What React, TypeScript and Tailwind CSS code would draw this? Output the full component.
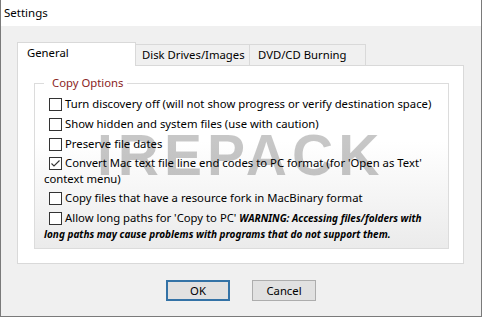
import React from "react";

const Box = ({ checked = false }: { checked?: boolean }) => (
  <span className="w-[13px] h-[13px] shrink-0 border border-[#333333] bg-white flex items-center justify-center">
    {checked && (
      <svg width="11" height="11" viewBox="0 0 11 11">
        <path d="M1.5 5.5 L4 8 L9.5 2.5" fill="none" stroke="#333333" strokeWidth="1.1" />
      </svg>
    )}
  </span>
);

const Row = ({ text, checked, className = "" }: { text: React.ReactNode; checked?: boolean; className?: string }) => (
  <div className={"flex items-center h-[16px] pl-[14px] " + className}>
    <Box checked={checked} />
    <span className="ml-[3px] whitespace-nowrap leading-[16px]">{text}</span>
  </div>
);

export default function App() {
  return (
    <div
      className="w-[482px] h-[317px] bg-[#f0f0f0] border-x border-b border-[#7a7a7a] flex flex-col text-[11.3px] text-black overflow-hidden"
      style={{ fontFamily: '"Noto Sans", "Open Sans", sans-serif' }}
    >
      <div className="h-[26px] bg-white flex items-center pl-[3px] shrink-0 text-[11.5px]">Settings</div>
      <div className="flex flex-col pl-[16px] pt-[15px]">
        <div className="flex items-end h-[24px] whitespace-nowrap">
          <div className="relative z-10 w-[119px] h-[24px] mb-[-1px] bg-white border border-b-0 border-[#d9d9d9] pl-[9px] pt-[2px] leading-[16px]">
            General
          </div>
          <div className="w-[114px] h-[21px] border-t border-r border-[#d9d9d9] pl-[6px] leading-[19px]">
            Disk Drives/Images
          </div>
          <div className="w-[116px] h-[21px] border-t border-r border-[#d9d9d9] pl-[8px] leading-[19px]">
            DVD/CD Burning
          </div>
        </div>
        <div className="relative w-[447px] h-[199px] bg-white border border-[#d9d9d9] pt-[9px] pl-[16px]">
          <fieldset className="w-[415px] h-[174px] border border-[#dcdcdc] bg-linear-to-b from-white from-35% to-[#ebebeb]">
            <legend className="ml-[9px] pl-[8px] pr-[4px] leading-[16px] text-[#8b2525]">Copy Options</legend>
            <Row className="mt-[5px]" text="Turn discovery off (will not show progress or verify destination space)" />
            <Row className="mt-[4px]" text="Show hidden and system files (use with caution)" />
            <Row className="mt-[4px]" text="Preserve file dates" />
            <Row className="mt-[3px]" checked text="Convert Mac text file line end codes to PC format (for 'Open as Text'" />
            <div className="h-[16px] leading-[16px] pl-[9px]">context menu)</div>
            <Row className="mt-[3px]" text="Copy files that have a resource fork in MacBinary format" />
            <Row
              className="mt-[4px]"
              text={
                <>
                  Allow long paths for 'Copy to PC'{" "}
                  <span className="font-bold italic text-[10px]">WARNING: Accessing files/folders with</span>
                </>
              }
            />
            <div className="h-[16px] leading-[16px] pl-[9px] font-bold italic text-[10px] whitespace-nowrap">
              long paths may cause problems with programs that do not support them.
            </div>
          </fieldset>
          <div
            className="absolute top-[61px] left-[79px] text-[57px] leading-none font-bold text-black/[0.22] pointer-events-none tracking-[5px] select-none whitespace-nowrap"
            style={{ fontFamily: '"Liberation Sans", Arial, sans-serif' }}
          >
            IREPACK
          </div>
        </div>
      </div>
      <div className="flex justify-center gap-[22px] mt-[16px]">
        <button className="w-[64px] h-[21px] bg-[#e1e1e1] border-2 border-[#3372a6] leading-[17px]">OK</button>
        <button className="w-[64px] h-[21px] bg-[#e1e1e1] border border-[#adadad] leading-[19px]">Cancel</button>
      </div>
    </div>
  );
}
